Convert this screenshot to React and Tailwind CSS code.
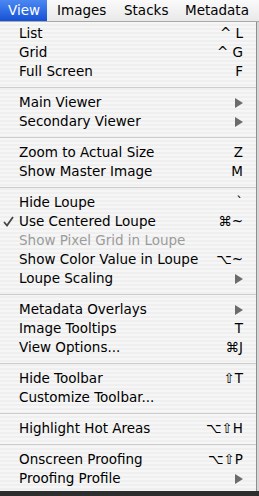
import React from "react";

const menu = [
  { label: "List", key: "^ L" },
  { label: "Grid", key: "^ G" },
  { label: "Full Screen", key: "F" },
  "sep",
  { label: "Main Viewer", sub: true },
  { label: "Secondary Viewer", sub: true },
  "sep",
  { label: "Zoom to Actual Size", key: "Z" },
  { label: "Show Master Image", key: "M" },
  "sep",
  { label: "Hide Loupe", key: "`" },
  { label: "Use Centered Loupe", key: "⌘~", checked: true },
  { label: "Show Pixel Grid in Loupe", disabled: true },
  { label: "Show Color Value in Loupe", key: "⌥~" },
  { label: "Loupe Scaling", sub: true },
  "sep",
  { label: "Metadata Overlays", sub: true },
  { label: "Image Tooltips", key: "T" },
  { label: "View Options...", key: "⌘J" },
  "sep",
  { label: "Hide Toolbar", key: "⇧T" },
  { label: "Customize Toolbar..." },
  "sep",
  { label: "Highlight Hot Areas", key: "⌥⇧H" },
  "sep",
  { label: "Onscreen Proofing", key: "⌥⇧P" },
  { label: "Proofing Profile", sub: true },
];

function Arrow() {
  return (
    <svg width="8" height="10" viewBox="0 0 8 10">
      <path d="M0 0 L8 5 L0 10 Z" fill="#6b6b6b" />
    </svg>
  );
}

function Check() {
  return (
    <svg width="11" height="11" viewBox="0 0 11 11" className="absolute left-[3px] top-[4px]">
      <path d="M1 6 L4 9.5 L10 1" fill="none" stroke="#444" strokeWidth="1.8" />
    </svg>
  );
}

function MenuRow({ item }) {
  return (
    <div
      className={`relative h-[19px] flex items-center justify-between pl-[19px] pr-[13px] ${
        item.disabled ? "text-[#9b9b9b]" : "text-black"
      }`}
    >
      {item.checked && <Check />}
      <span className="pt-px">{item.label}</span>
      {item.sub ? <Arrow /> : <span className="pt-px">{item.key}</span>}
    </div>
  );
}

export default function App() {
  return (
    <div
      className="w-[259px] h-[496px] flex flex-col overflow-hidden text-[13.5px] leading-none"
      style={{ fontFamily: '"DejaVu Sans", "Lucida Grande", sans-serif' }}
    >
      {/* menubar */}
      <div className="h-[22px] flex items-stretch bg-gradient-to-b from-[#fafafa] to-[#e9e9e9] border-b border-[#a9a9a9] text-black">
        <div className="w-[47px] pl-2 flex items-center bg-gradient-to-b from-[#4c88f2] to-[#1550d6] text-white">
          View
        </div>
        <div className="w-[67px] pl-[10px] flex items-center">Images</div>
        <div className="w-[61px] pl-[10px] flex items-center">Stacks</div>
        <div className="flex-1 pl-[10px] flex items-center">Metadata</div>
      </div>

      <div className="flex-1 flex">
        {/* menu */}
        <div className="w-[256px] pt-[2px] pb-[3px] bg-[repeating-linear-gradient(to_bottom,#f6f6f6_0px,#f6f6f6_2px,#efefef_2px,#efefef_4px)]">
          {menu.map((item, i) =>
            item === "sep" ? (
              <div key={i} className="h-[12px] flex items-center">
                <div className="w-full h-px bg-[#cdcdcd]" />
              </div>
            ) : (
              <MenuRow key={i} item={item} />
            )
          )}
        </div>
        <div className="flex-1 border-l border-[#8e8e8e] bg-[#d6d6d6]" />
      </div>

      <div className="h-[5px] bg-[#2e2e2e]" />
    </div>
  );
}
